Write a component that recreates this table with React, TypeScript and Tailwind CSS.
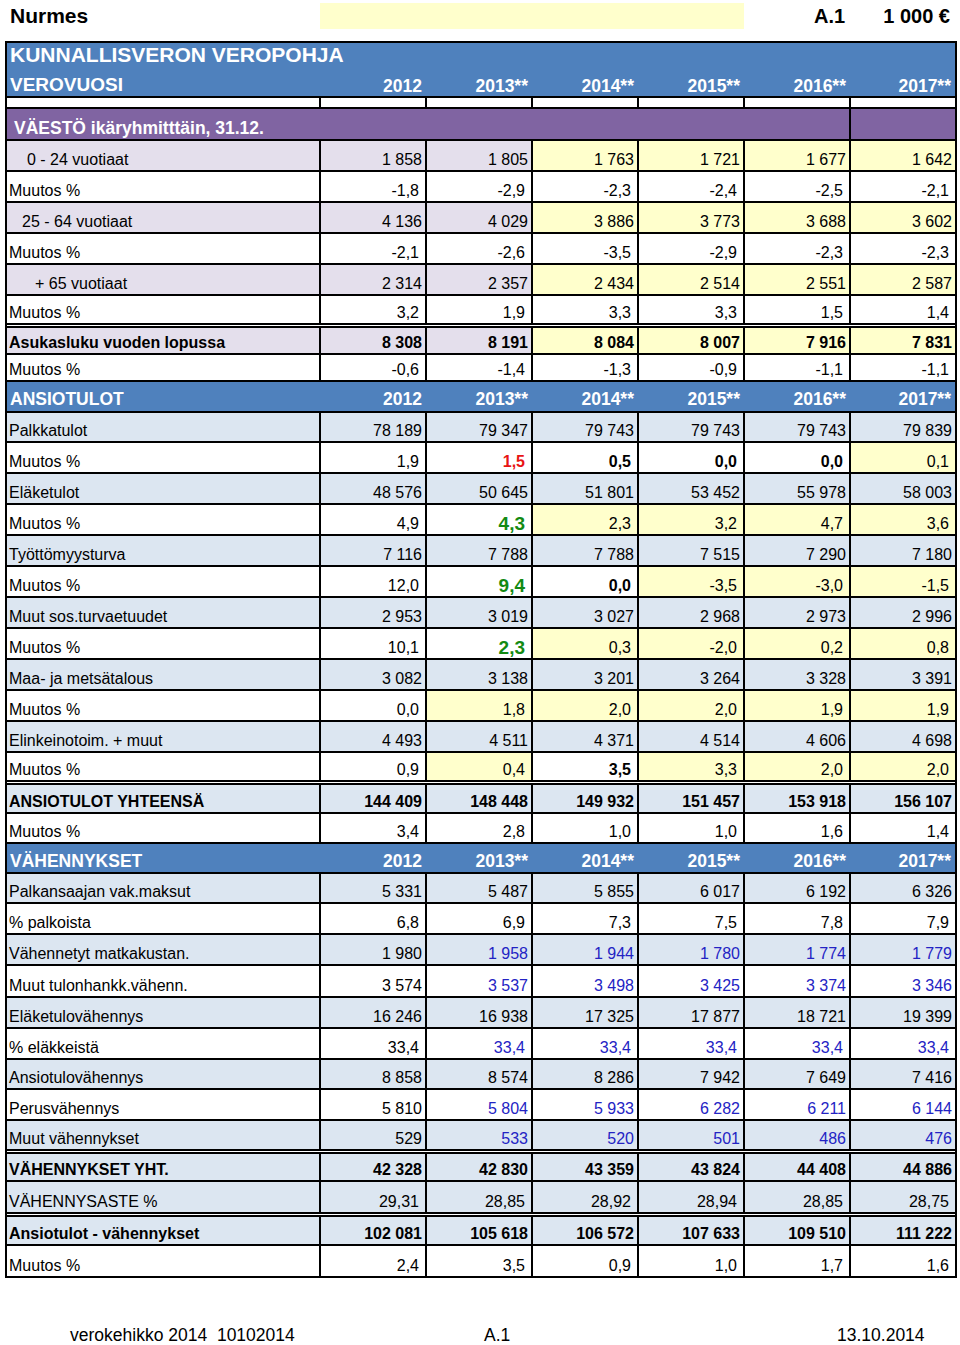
import React from "react";

type Bg = "L" | "B" | "Y" | "W";

const bgCls: Record<string, string> = {
  L: "bg-[#e4dfec]",
  B: "bg-[#dce6f1]",
  Y: "bg-[#ffffcc]",
  W: "bg-white",
};

const toneCls: Record<string, string> = {
  n: "",
  b: "font-bold",
  r: "font-bold text-[#e81414]",
  g: "font-bold text-[19px] text-[#138a13]",
  u: "text-[#2323c4]",
};

type DataRow = {
  kind: "data";
  label: string;
  lbg: Bg;
  bold?: boolean;
  pl: string;
  h: string;
  pct?: boolean;
  vals: string[];
  bgs: string;
  tones: string;
};
type BandRow = { kind: "band"; label: string; h: string; pb: string };
type DoubleRow = { kind: "double" };
type Row = DataRow | BandRow | DoubleRow;

const d = (
  label: string,
  lbg: Bg,
  vals: string,
  bgs: string,
  tones: string,
  h: string,
  opts: { bold?: boolean; pl?: string; pct?: boolean } = {}
): DataRow => ({
  kind: "data",
  label,
  lbg,
  vals: vals.split("|"),
  bgs,
  tones,
  h,
  bold: opts.bold,
  pl: opts.pl ?? "pl-[2px]",
  pct: opts.pct,
});

const dbl: DoubleRow = { kind: "double" };

const rows: Row[] = [
  d("0 - 24 vuotiaat", "L", "1 858|1 805|1 763|1 721|1 677|1 642", "LLYYYY", "nnnnnn", "h-[29px]", { pl: "pl-[20px]" }),
  d("Muutos %", "W", "-1,8|-2,9|-2,3|-2,4|-2,5|-2,1", "WWWWWW", "nnnnnn", "h-[29px]", { pct: true }),
  d("25 - 64 vuotiaat", "L", "4 136|4 029|3 886|3 773|3 688|3 602", "LLYYYY", "nnnnnn", "h-[29px]", { pl: "pl-[15px]" }),
  d("Muutos %", "W", "-2,1|-2,6|-3,5|-2,9|-2,3|-2,3", "WWWWWW", "nnnnnn", "h-[29px]", { pct: true }),
  d("+ 65 vuotiaat", "L", "2 314|2 357|2 434|2 514|2 551|2 587", "LLYYYY", "nnnnnn", "h-[29px]", { pl: "pl-[28px]" }),
  d("Muutos %", "W", "3,2|1,9|3,3|3,3|1,5|1,4", "WWWWWW", "nnnnnn", "h-[27px]", { pct: true }),
  dbl,
  d("Asukasluku vuoden lopussa", "L", "8 308|8 191|8 084|8 007|7 916|7 831", "LLYYYY", "bbbbbb", "h-[25px]", { bold: true }),
  d("Muutos %", "W", "-0,6|-1,4|-1,3|-0,9|-1,1|-1,1", "WWWWWW", "nnnnnn", "h-[25px]", { pct: true }),
  { kind: "band", label: "ANSIOTULOT", h: "h-[29px]", pb: "pb-[2px]" },
  d("Palkkatulot", "B", "78 189|79 347|79 743|79 743|79 743|79 839", "BBBBBB", "nnnnnn", "h-[28px]"),
  d("Muutos %", "W", "1,9|1,5|0,5|0,0|0,0|0,1", "WWWWWY", "nrbbbn", "h-[29px]", { pct: true }),
  d("Eläketulot", "B", "48 576|50 645|51 801|53 452|55 978|58 003", "BBBBBB", "nnnnnn", "h-[29px]"),
  d("Muutos %", "W", "4,9|4,3|2,3|3,2|4,7|3,6", "WWYYYY", "ngnnnn", "h-[29px]", { pct: true }),
  d("Työttömyysturva", "B", "7 116|7 788|7 788|7 515|7 290|7 180", "BBBBBB", "nnnnnn", "h-[29px]"),
  d("Muutos %", "W", "12,0|9,4|0,0|-3,5|-3,0|-1,5", "WWWYYY", "ngbnnn", "h-[29px]", { pct: true }),
  d("Muut sos.turvaetuudet", "B", "2 953|3 019|3 027|2 968|2 973|2 996", "BBBBBB", "nnnnnn", "h-[29px]"),
  d("Muutos %", "W", "10,1|2,3|0,3|-2,0|0,2|0,8", "WWYYYY", "ngnnnn", "h-[29px]", { pct: true }),
  d("Maa- ja metsätalous", "B", "3 082|3 138|3 201|3 264|3 328|3 391", "BBBBBB", "nnnnnn", "h-[29px]"),
  d("Muutos %", "W", "0,0|1,8|2,0|2,0|1,9|1,9", "WYYYYY", "nnnnnn", "h-[29px]", { pct: true }),
  d("Elinkeinotoim. + muut", "B", "4 493|4 511|4 371|4 514|4 606|4 698", "BBBBBB", "nnnnnn", "h-[29px]"),
  d("Muutos %", "W", "0,9|0,4|3,5|3,3|2,0|2,0", "WYWYYY", "nnbnnn", "h-[27px]", { pct: true }),
  dbl,
  d("ANSIOTULOT YHTEENSÄ", "B", "144 409|148 448|149 932|151 457|153 918|156 107", "BBBBBB", "bbbbbb", "h-[27px]", { bold: true }),
  d("Muutos %", "W", "3,4|2,8|1,0|1,0|1,6|1,4", "WWWWWW", "nnnnnn", "h-[28px]", { pct: true }),
  { kind: "band", label: "VÄHENNYKSET", h: "h-[28px]", pb: "pb-[1px]" },
  d("Palkansaajan vak.maksut", "B", "5 331|5 487|5 855|6 017|6 192|6 326", "BBBBBB", "nnnnnn", "h-[28px]"),
  d("% palkoista", "W", "6,8|6,9|7,3|7,5|7,8|7,9", "WWWWWW", "nnnnnn", "h-[29px]", { pct: true }),
  d("Vähennetyt matkakustan.", "B", "1 980|1 958|1 944|1 780|1 774|1 779", "BBBBBB", "nuuuuu", "h-[29px]"),
  d("Muut tulonhankk.vähenn.", "W", "3 574|3 537|3 498|3 425|3 374|3 346", "WWWWWW", "nuuuuu", "h-[30px]"),
  d("Eläketulovähennys", "B", "16 246|16 938|17 325|17 877|18 721|19 399", "BBBBBB", "nnnnnn", "h-[29px]"),
  d("% eläkkeistä", "W", "33,4|33,4|33,4|33,4|33,4|33,4", "WWWWWW", "nuuuuu", "h-[29px]", { pct: true }),
  d("Ansiotulovähennys", "B", "8 858|8 574|8 286|7 942|7 649|7 416", "BBBBBB", "nnnnnn", "h-[28px]"),
  d("Perusvähennys", "W", "5 810|5 804|5 933|6 282|6 211|6 144", "WWWWWW", "nuuuuu", "h-[29px]"),
  d("Muut vähennykset", "B", "529|533|520|501|486|476", "BBBBBB", "nuuuuu", "h-[28px]"),
  dbl,
  d("VÄHENNYKSET YHT.", "B", "42 328|42 830|43 359|43 824|44 408|44 886", "BBBBBB", "bbbbbb", "h-[26px]", { bold: true }),
  d("VÄHENNYSASTE %", "B", "29,31|28,85|28,92|28,94|28,85|28,75", "BBBBBB", "nnnnnn", "h-[30px]", { pct: true }),
  dbl,
  d("Ansiotulot - vähennykset", "B", "102 081|105 618|106 572|107 633|109 510|111 222", "BBBBBB", "bbbbbb", "h-[27px]", { bold: true }),
  d("Muutos %", "W", "2,4|3,5|0,9|1,0|1,7|1,6", "WWWWWW", "nnnnnn", "h-[30px]", { pct: true }),
];

const years = ["2012", "2013**", "2014**", "2015**", "2016**", "2017**"];

function Band({ row }: { row: BandRow }) {
  return (
    <div
      className={`col-span-7 ${row.h} bg-[#4f81bd] grid grid-cols-[313px_repeat(5,106px)_105px] items-end ${row.pb} text-white font-bold text-[17.5px] leading-[20px]`}
    >
      <div className="pl-[3px]">{row.label}</div>
      {years.map((y) => (
        <div key={y} className="text-right pr-[4px]">
          {y}
        </div>
      ))}
    </div>
  );
}

function Data({ row }: { row: DataRow }) {
  return (
    <>
      <div
        className={`${row.h} ${bgCls[row.lbg]} ${row.pl} flex items-end pb-[1px] ${row.bold ? "font-bold" : ""}`}
      >
        {row.label}
      </div>
      {row.vals.map((v, i) => (
        <div
          key={i}
          className={`${row.h} ${bgCls[row.bgs[i]]} flex items-end justify-end pb-[1px] ${row.pct ? "pr-[6px]" : "pr-[3px]"} ${toneCls[row.tones[i]]}`}
        >
          {v}
        </div>
      ))}
    </>
  );
}

export default function App() {
  return (
    <div className="w-[960px] min-h-[1345px] bg-white text-black font-['Liberation_Sans',Arial,Helvetica,sans-serif] text-[16px] leading-[18px]">
      {/* Title row */}
      <div className="h-[32px] flex items-center pr-[10px]">
        <div className="w-[320px] pl-[10px] font-bold text-[21px] leading-[24px]">Nurmes</div>
        <div className="w-[424px] h-[26px] bg-[#ffffcc]" />
        <div className="ml-[70px] font-bold text-[20px] leading-[24px]">A.1</div>
        <div className="ml-auto font-bold text-[20px] leading-[24px]">1 000 €</div>
      </div>

      {/* Table */}
      <div className="mt-[9px] ml-[5px] w-[952px] bg-black p-[2px] grid grid-cols-[312px_repeat(6,104px)] gap-[2px]">
        {/* Main header */}
        <div className="col-span-7 h-[53px] bg-[#4f81bd] text-white font-bold flex flex-col">
          <div className="pl-[3px] text-[21px] leading-[24px]">KUNNALLISVERON VEROPOHJA</div>
          <div className="h-[29px] grid grid-cols-[313px_repeat(5,106px)_105px] items-end">
            <div className="pl-[3px] text-[19px] leading-[22px]">VEROVUOSI</div>
            {years.map((y) => (
              <div key={y} className="text-right pr-[4px] text-[17.5px] leading-[20px]">
                {y}
              </div>
            ))}
          </div>
        </div>
        {/* White spacer row */}
        {[0, 1, 2, 3, 4, 5, 6].map((i) => (
          <div key={i} className="h-[9px] bg-white" />
        ))}
        {/* Purple section row */}
        <div className="col-span-6 h-[30px] bg-[#8064a2] text-white font-bold text-[17.5px] leading-[20px] flex items-end pb-[1px] pl-[7px]">
          VÄESTÖ ikäryhmitttäin, 31.12.
        </div>
        <div className="h-[30px] bg-[#8064a2]" />

        {rows.map((row, i) => {
          if (row.kind === "double")
            return <div key={i} className="col-span-7 h-[1px] bg-white" />;
          if (row.kind === "band") return <Band key={i} row={row} />;
          return <Data key={i} row={row} />;
        })}
      </div>

      {/* Footer */}
      <div className="mt-[47px] flex text-[17.5px] leading-[20px]">
        <div className="w-[484px] pl-[70px]">verokehikko 2014{"\u00a0\u00a0"}10102014</div>
        <div className="w-[353px]">A.1</div>
        <div>13.10.2014</div>
      </div>
    </div>
  );
}
